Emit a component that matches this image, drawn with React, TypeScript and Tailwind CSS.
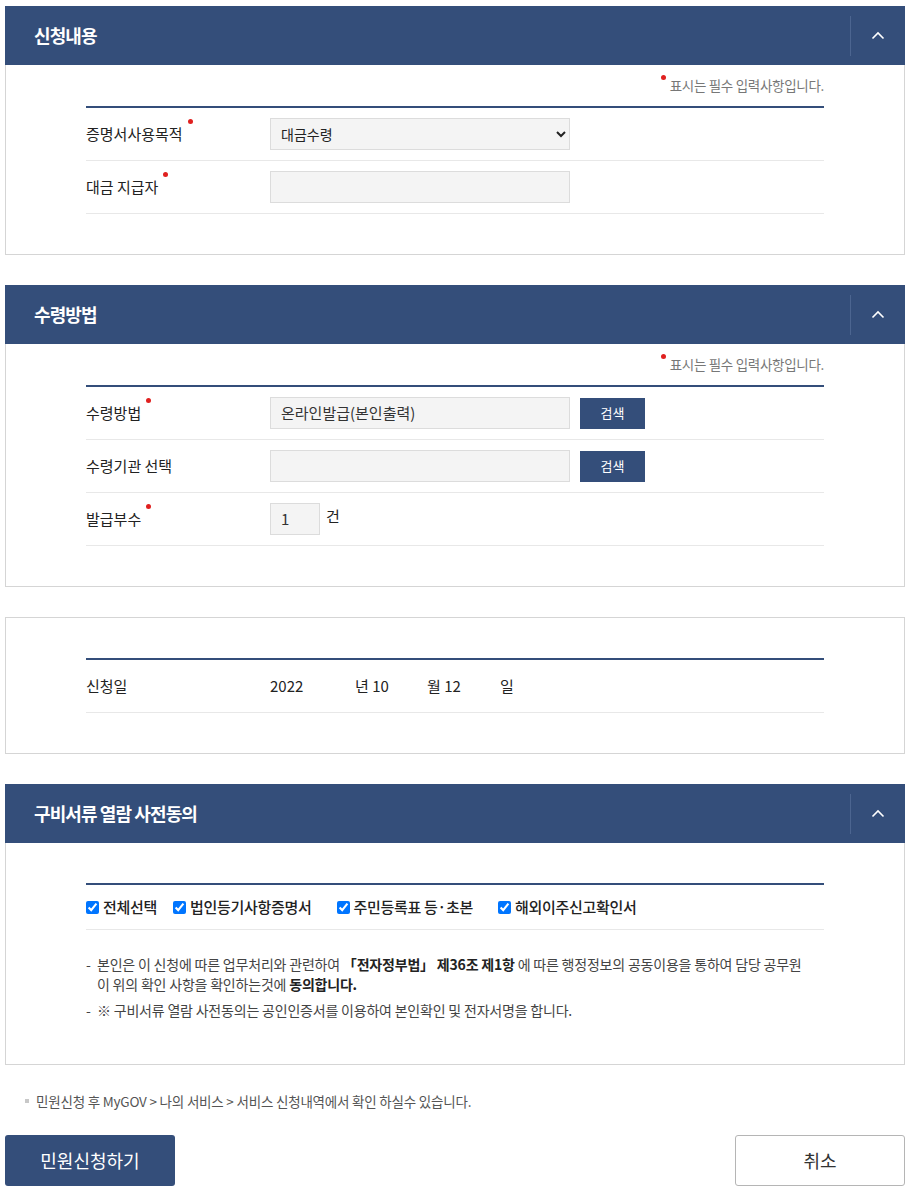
const font = { fontFamily: '"Noto Sans CJK KR", "Noto Sans", sans-serif' };

function Dot({ className = '' }: { className?: string }) {
  return <span className={`absolute w-[5px] h-[5px] rounded-full bg-[#e0201f] ${className}`} />;
}

function SectionHeader({ title }: { title: string }) {
  return (
    <div className="flex items-center h-[59px] bg-[#344e7a]">
      <h2 className="flex-1 pl-[29px] text-[18px] font-bold text-white tracking-[-0.9px]">{title}</h2>
      <div className="flex items-center justify-center w-[55px] h-[40px] border-l border-[#4c6590]">
        <svg width="14" height="9" viewBox="0 0 14 9" fill="none">
          <polyline points="1.5,7.5 7,2 12.5,7.5" stroke="white" strokeWidth="1.6" />
        </svg>
      </div>
    </div>
  );
}

function RequiredNote() {
  return (
    <div className="flex justify-end pt-[11px] pb-[12px]">
      <span className="relative pl-[9px] text-[13.5px] leading-[18px] text-[#777] tracking-[-0.3px]">
        <Dot className="left-0 top-[-1px]" />
        표시는 필수 입력사항입니다.
      </span>
    </div>
  );
}

function Row({ label, required, children }: { label: string; required?: boolean; children?: React.ReactNode }) {
  return (
    <div className="flex items-center py-[10px] border-b border-[#e8e8e8] min-h-[53px]">
      <div className="w-[184px] text-[15px] text-[#222]">
        <span className="relative">
          {label}
          {required && <Dot className="right-[-10px] top-[-4px]" />}
        </span>
      </div>
      <div className="flex items-center">{children}</div>
    </div>
  );
}

function TextBox({ value = '', w = 'w-[300px]' }: { value?: string; w?: string }) {
  return (
    <div className={`${w} h-[32px] flex items-center px-[10px] bg-[#f4f4f4] border border-[#dcdcdc] text-[15px] text-[#333]`}>
      {value}
    </div>
  );
}

function SearchButton() {
  return (
    <button className="ml-[10px] w-[65px] h-[31px] bg-[#344e7a] text-white text-[13px]">검색</button>
  );
}

function Check({ label, className = '' }: { label: string; className?: string }) {
  return (
    <label className={`flex items-center ${className}`}>
      <input type="checkbox" defaultChecked className="w-[13px] h-[13px] m-0 mr-[4px] accent-[#0075ff]" />
      <span className="text-[15px] font-medium text-[#222] tracking-[-0.3px]">{label}</span>
    </label>
  );
}

export default function App() {
  return (
    <div style={font} className="w-[912px] bg-white pl-[5px] pr-[7px] pt-[6px] pb-[11px]">
      {/* 신청내용 */}
      <section>
        <SectionHeader title="신청내용" />
        <div className="border-x border-b border-[#d5d5d5] px-[80px] pb-[40px]">
          <RequiredNote />
          <div className="border-t-2 border-[#344e7a]">
            <Row label="증명서사용목적" required>
              <select
                defaultValue="대금수령"
                className="w-[300px] h-[32px] px-[6px] bg-[#f4f4f4] border border-[#dcdcdc] text-[14px] text-[#222]"
              >
                <option>대금수령</option>
              </select>
            </Row>
            <Row label="대금 지급자" required>
              <TextBox />
            </Row>
          </div>
        </div>
      </section>

      {/* 수령방법 */}
      <section className="mt-[30px]">
        <SectionHeader title="수령방법" />
        <div className="border-x border-b border-[#d5d5d5] px-[80px] pb-[40px]">
          <RequiredNote />
          <div className="border-t-2 border-[#344e7a]">
            <Row label="수령방법" required>
              <TextBox value="온라인발급(본인출력)" />
              <SearchButton />
            </Row>
            <Row label="수령기관 선택">
              <TextBox />
              <SearchButton />
            </Row>
            <Row label="발급부수" required>
              <TextBox value="1" w="w-[50px]" />
              <span className="ml-[6px] text-[15px] text-[#222] -mt-[6px]">건</span>
            </Row>
          </div>
        </div>
      </section>

      {/* 신청일 */}
      <section className="mt-[30px] border border-[#d5d5d5] px-[80px] pt-[40px] pb-[40px]">
        <div className="border-t-2 border-[#344e7a]">
          <Row label="신청일">
            <div className="flex text-[15px] text-[#222]">
              <span className="w-[85px]">2022</span>
              <span className="w-[72px]">년 10</span>
              <span className="w-[73px]">월 12</span>
              <span>일</span>
            </div>
          </Row>
        </div>
      </section>

      {/* 구비서류 열람 사전동의 */}
      <section className="mt-[30px]">
        <SectionHeader title="구비서류 열람 사전동의" />
        <div className="border-x border-b border-[#d5d5d5] px-[80px] pt-[40px] pb-[44px]">
          <div className="border-t-2 border-[#344e7a]">
            <div className="flex items-center h-[45px] border-b border-[#e8e8e8]">
              <Check label="전체선택" className="mr-[16px]" />
              <Check label="법인등기사항증명서" className="mr-[25px]" />
              <Check label="주민등록표 등·초본" className="mr-[25px]" />
              <Check label="해외이주신고확인서" />
            </div>
          </div>
          <div className="pt-[24px] text-[14px] leading-[20px] text-[#444] tracking-[-0.2px]">
            <div className="flex">
              <span className="w-[11px] shrink-0">-</span>
              <div>
                <p className="whitespace-nowrap">
                  본인은 이 신청에 따른 업무처리와 관련하여 <b className="text-[#222]">「전자정부법」 제36조 제1항</b> 에 따른 행정정보의 공동이용을 통하여 담당 공무원
                </p>
                <p className="whitespace-nowrap">
                  이 위의 확인 사항을 확인하는것에 <b className="text-[#222]">동의합니다.</b>
                </p>
              </div>
            </div>
            <div className="flex mt-[6px]">
              <span className="w-[11px] shrink-0">-</span>
              <p>※ 구비서류 열람 사전동의는 공인인증서를 이용하여 본인확인 및 전자서명을 합니다.</p>
            </div>
          </div>
        </div>
      </section>

      {/* footer note */}
      <p className="mt-[26px] pl-[20px] flex items-center text-[13.5px] text-[#555] tracking-[-0.2px]">
        <span className="w-[4px] h-[4px] bg-[#c8c8c8] mr-[7px]" />
        민원신청 후 MyGOV &gt; 나의 서비스 &gt; 서비스 신청내역에서 확인 하실수 있습니다.
      </p>

      <div className="mt-[24px] flex justify-between">
        <button className="w-[170px] h-[51px] rounded-[3px] bg-[#344e7a] text-white text-[18px]">민원신청하기</button>
        <button className="w-[170px] h-[51px] rounded-[3px] bg-white border border-[#b5b5b5] text-[#333] text-[18px]">취소</button>
      </div>
    </div>
  );
}
